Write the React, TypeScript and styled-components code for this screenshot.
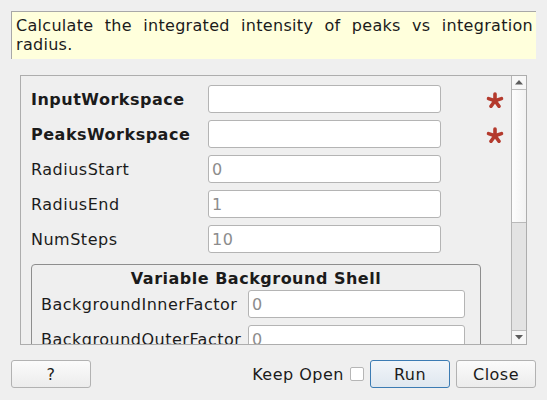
import React from 'react';
import styled, { createGlobalStyle } from 'styled-components';

const Global = createGlobalStyle`
  html, body { margin: 0; padding: 0; background: #efefef; }
  body {
    font-family: "DejaVu Sans", "Noto Sans", sans-serif;
    font-size: 16px;
    letter-spacing: 0.5px;
    color: #1b1b1b;
  }
`;

const Dialog = styled.div`
  width: 547px;
  height: 400px;
  box-sizing: border-box;
  padding: 11px 11px 0 11px;
  display: flex;
  flex-direction: column;
  background: #efefef;
`;

const Description = styled.div`
  height: 48px;
  box-sizing: border-box;
  background: #ffffdc;
  border-top: 1px solid #a8a8a8;
  border-left: 1px solid #a8a8a8;
  padding: 4px 3px 0 4px;
  text-align: justify;
  line-height: 19px;
  letter-spacing: 0.3px;
`;

const ScrollArea = styled.div`
  margin: 16px 9px 0 9px;
  height: 270px;
  box-sizing: border-box;
  border: 1px solid #adadad;
  display: flex;
`;

const Content = styled.div`
  flex: 1;
  overflow: hidden;
  padding: 9px 0 0 10px;
`;

const FormGrid = styled.div<{ $labelWidth: number; $inputWidth: number }>`
  display: grid;
  grid-template-columns: ${(p) => p.$labelWidth}px ${(p) => p.$inputWidth}px 1fr;
  grid-auto-rows: 28px;
  row-gap: 7px;
  align-items: center;
`;

const Label = styled.div<{ $bold?: boolean }>`
  font-weight: ${(p) => (p.$bold ? 700 : 400)};
  white-space: nowrap;
  line-height: 19px;
`;

const TextInput = styled.input`
  height: 28px;
  width: 100%;
  box-sizing: border-box;
  margin: 0;
  border: 1px solid #b4b4b4;
  border-radius: 3px;
  background: #ffffff;
  padding: 0 3px;
  font-family: "DejaVu Sans", sans-serif;
  font-size: 16px;
  letter-spacing: 0.5px;
  color: #1b1b1b;
  outline: none;
  &::placeholder { color: #8c8c8c; }
`;

const Required = styled.svg`
  width: 18px;
  height: 18px;
  margin-left: 45px;
  display: block;
`;

const Group = styled.div`
  margin-top: 11px;
  width: 450px;
  box-sizing: border-box;
  border: 1px solid #8e8e8e;
  border-radius: 4px;
  padding-top: 4px;
`;

const GroupTitle = styled.div`
  text-align: center;
  font-weight: 700;
  line-height: 19px;
`;

const GroupBody = styled.div`
  padding: 2px 15px 0 9px;
`;

const Scrollbar = styled.div`
  width: 15px;
  box-sizing: border-box;
  border-left: 1px solid #b4b4b4;
  display: flex;
  flex-direction: column;
`;

const ArrowButton = styled.div<{ $down?: boolean }>`
  height: 14px;
  box-sizing: border-box;
  background: #f7f7f7;
  ${(p) => (p.$down ? 'border-top: 1px solid #bdbdbd;' : 'border-bottom: 1px solid #bdbdbd;')}
  display: flex;
  align-items: center;
  justify-content: center;
`;

const Handle = styled.div`
  height: 133px;
  box-sizing: border-box;
  background: linear-gradient(to right, #fdfdfd, #f2f2f2);
  border-bottom: 1px solid #b9b9b9;
`;

const Groove = styled.div`
  flex: 1;
  background: #e3e3e3;
`;

const ButtonBar = styled.div`
  margin-top: 15px;
  height: 28px;
  display: flex;
  align-items: center;
`;

const Spacer = styled.div`
  flex: 1;
`;

const Button = styled.button<{ $primary?: boolean }>`
  width: 80px;
  height: 28px;
  margin: 0 0 0 ${(p) => (p.$primary ? 6 : 0)}px;
  box-sizing: border-box;
  border: 1px solid ${(p) => (p.$primary ? '#3b7bb3' : '#b2b2b2')};
  border-radius: 3px;
  background: ${(p) =>
    p.$primary
      ? 'linear-gradient(to bottom, #f1f5f9, #dfe7ef)'
      : 'linear-gradient(to bottom, #fbfbfb, #ececec)'};
  font-family: "DejaVu Sans", sans-serif;
  font-size: 16px;
  letter-spacing: 0.5px;
  color: #1b1b1b;
  padding: 0;
  & + & { margin-left: 6px; }
`;

const KeepOpen = styled.label`
  display: flex;
  align-items: center;
  gap: 6px;
`;

const CheckBox = styled.span`
  width: 14px;
  height: 14px;
  box-sizing: border-box;
  border: 1px solid #b6b6b6;
  border-radius: 2px;
  background: #ffffff;
  display: block;
`;

const Asterisk = () => {
  const cx = 9;
  const cy = 10.75;
  const r = 6.8;
  const angles = [-90, -18, 54, 126, 198];
  return (
    <Required viewBox="0 0 18 18">
      {angles.map((a) => {
        const rad = (a * Math.PI) / 180;
        return (
          <line
            key={a}
            x1={cx}
            y1={cy}
            x2={cx + r * Math.cos(rad)}
            y2={cy + r * Math.sin(rad)}
            stroke="#b43a2d"
            strokeWidth={3.6}
            strokeLinecap="round"
          />
        );
      })}
    </Required>
  );
};

const Arrow = ({ down }: { down?: boolean }) => (
  <svg width="8" height="5" viewBox="0 0 8 5">
    <polygon points={down ? '0,0 8,0 4,4.5' : '0,4.5 8,4.5 4,0'} fill="#5c5c5c" />
  </svg>
);

const mainFields = [
  { name: 'InputWorkspace', bold: true, value: '', required: true },
  { name: 'PeaksWorkspace', bold: true, value: '', required: true },
  { name: 'RadiusStart', value: '0' },
  { name: 'RadiusEnd', value: '1' },
  { name: 'NumSteps', value: '10' },
];

const shellFields = [
  { name: 'BackgroundInnerFactor', value: '0' },
  { name: 'BackgroundOuterFactor', value: '0' },
];

export default function App() {
  return (
    <>
      <Global />
      <Dialog>
        <Description>
          Calculate the integrated intensity of peaks vs integration radius.
        </Description>
        <ScrollArea>
          <Content>
            <FormGrid $labelWidth={177} $inputWidth={233}>
              {mainFields.map((f) => (
                <React.Fragment key={f.name}>
                  <Label $bold={f.bold}>{f.name}</Label>
                  <TextInput readOnly placeholder={f.value} />
                  <div>{f.required ? <Asterisk /> : null}</div>
                </React.Fragment>
              ))}
            </FormGrid>
            <Group>
              <GroupTitle>Variable Background Shell</GroupTitle>
              <GroupBody>
                <FormGrid $labelWidth={207} $inputWidth={217}>
                  {shellFields.map((f) => (
                    <React.Fragment key={f.name}>
                      <Label>{f.name}</Label>
                      <TextInput readOnly placeholder={f.value} />
                      <div />
                    </React.Fragment>
                  ))}
                </FormGrid>
              </GroupBody>
            </Group>
          </Content>
          <Scrollbar>
            <ArrowButton>
              <Arrow />
            </ArrowButton>
            <Handle />
            <Groove />
            <ArrowButton $down>
              <Arrow down />
            </ArrowButton>
          </Scrollbar>
        </ScrollArea>
        <ButtonBar>
          <Button>?</Button>
          <Spacer />
          <KeepOpen>
            Keep Open
            <CheckBox />
          </KeepOpen>
          <Button $primary>Run</Button>
          <Button>Close</Button>
        </ButtonBar>
      </Dialog>
    </>
  );
}
